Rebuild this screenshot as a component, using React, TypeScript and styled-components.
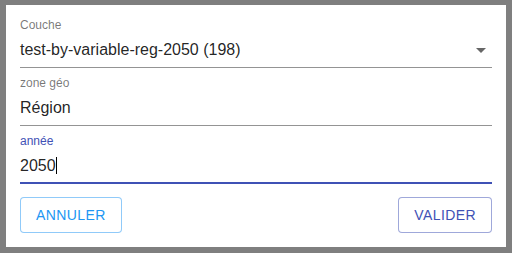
import styled, { createGlobalStyle } from "styled-components";

const GlobalStyle = createGlobalStyle`
  html, body {
    margin: 0;
    padding: 0;
    background: #7f7f7f;
  }
  body {
    font-family: "Liberation Sans", Arial, sans-serif;
  }
`;

const Backdrop = styled.div`
  width: 512px;
  height: 253px;
  box-sizing: border-box;
  padding: 5px 6px 6px;
  background: #7f7f7f;
`;

const Panel = styled.div`
  width: 500px;
  height: 242px;
  box-sizing: border-box;
  padding: 14px;
  background: #fff;
  display: flex;
  flex-direction: column;
  gap: 10px;
`;

const Field = styled.div`
  display: flex;
  flex-direction: column;
  height: 48px;
`;

const Label = styled.label<{ $focused?: boolean }>`
  font-size: 12px;
  line-height: 12px;
  color: ${({ $focused }) => ($focused ? "#3f51b5" : "rgba(0, 0, 0, 0.54)")};
`;

const InputRow = styled.div<{ $focused?: boolean }>`
  margin-top: 4px;
  display: flex;
  align-items: center;
  height: 19px;
  padding: 5px 0 ${({ $focused }) => ($focused ? "7px" : "8px")};
  border-bottom: ${({ $focused }) =>
    $focused ? "2px solid #3f51b5" : "1px solid rgba(0, 0, 0, 0.42)"};
`;

const Value = styled.span`
  font-size: 16px;
  line-height: 19px;
  color: rgba(0, 0, 0, 0.87);
  white-space: nowrap;
`;

const Caret = styled.span`
  width: 1px;
  height: 17px;
  background: #000;
  margin-left: 0;
`;

const Spacer = styled.div`
  flex: 1;
`;

const Arrow = styled.svg`
  width: 10px;
  height: 5px;
  margin: 2px 6px 0 0;
  fill: rgba(0, 0, 0, 0.6);
`;

const Actions = styled.div`
  margin-top: 4px;
  display: flex;
  justify-content: space-between;
`;

const Button = styled.button<{ $color: string; $border: string }>`
  height: 36px;
  padding: 0 15px;
  background: #fff;
  border: 1px solid ${({ $border }) => $border};
  border-radius: 4px;
  color: ${({ $color }) => $color};
  font-family: "Liberation Sans", Arial, sans-serif;
  font-size: 14px;
  letter-spacing: 0.4px;
  text-transform: uppercase;
  cursor: pointer;
`;

export default function App() {
  return (
    <>
      <GlobalStyle />
      <Backdrop>
        <Panel>
          <Field>
            <Label>Couche</Label>
            <InputRow>
              <Value>test-by-variable-reg-2050 (198)</Value>
              <Spacer />
              <Arrow viewBox="7 10 10 5">
                <path d="M7 10l5 5 5-5z" />
              </Arrow>
            </InputRow>
          </Field>
          <Field>
            <Label>zone géo</Label>
            <InputRow>
              <Value>Région</Value>
            </InputRow>
          </Field>
          <Field>
            <Label $focused>année</Label>
            <InputRow $focused>
              <Value>2050</Value>
              <Caret />
            </InputRow>
          </Field>
          <Actions>
            <Button $color="#2196f3" $border="rgba(33, 150, 243, 0.5)">
              Annuler
            </Button>
            <Button $color="#3f51b5" $border="rgba(63, 81, 181, 0.5)">
              Valider
            </Button>
          </Actions>
        </Panel>
      </Backdrop>
    </>
  );
}
